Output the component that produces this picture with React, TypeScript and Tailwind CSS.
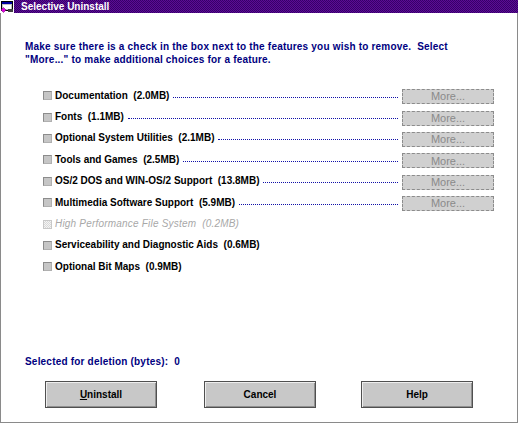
const features = [
  { label: "Documentation  (2.0MB)", more: true },
  { label: "Fonts  (1.1MB)", more: true },
  { label: "Optional System Utilities  (2.1MB)", more: true },
  { label: "Tools and Games  (2.5MB)", more: true },
  { label: "OS/2 DOS and WIN-OS/2 Support  (13.8MB)", more: true },
  { label: "Multimedia Software Support  (5.9MB)", more: true },
  { label: "High Performance File System  (0.2MB)", more: false, disabled: true },
  { label: "Serviceability and Diagnostic Aids  (0.6MB)", more: false },
  { label: "Optional Bit Maps  (0.9MB)", more: false },
]

const WindowIcon = () => (
  <svg width="14" height="13" viewBox="0 0 14 13" className="shrink-0">
    <rect x="0" y="0" width="14" height="13" fill="#ffffff" />
    <rect x="1.5" y="1.5" width="11" height="9" fill="#c0c0c0" stroke="#000" strokeWidth="1" />
    <rect x="2" y="2" width="10" height="2" fill="#0000a0" />
    <rect x="3" y="5" width="8" height="4" fill="#ffffff" />
    <path d="M3.5 12.5 L1 10 L3.5 7.5 L6 10 Z" fill="#e000e0" stroke="#600060" strokeWidth="0.5" />
    <rect x="8" y="9" width="5" height="3" fill="#404040" />
  </svg>
)

const Checkbox = ({ disabled }: { disabled?: boolean }) => (
  <div
    className={
      disabled
        ? "w-[9px] h-[9px] shrink-0 border border-[#c8c8c8] bg-[repeating-conic-gradient(#d8d8d8_0_25%,#f4f4f4_0_50%)] bg-[length:2px_2px]"
        : "w-[9px] h-[9px] shrink-0 border border-t-[#8c8c8c] border-l-[#8c8c8c] border-r-[#b0b0b0] border-b-[#b0b0b0] bg-[#c6c6c6]"
    }
  />
)

export default function App() {
  return (
    <div className="w-[518px] h-[424px] bg-white flex flex-col font-['Liberation_Sans',Arial,sans-serif] text-[10px] font-bold overflow-hidden">
      {/* title bar */}
      <div className="h-[13px] flex items-center shrink-0 bg-[repeating-conic-gradient(#5c0c94_0_25%,#36006a_0_50%)] bg-[length:2px_2px]">
        <WindowIcon />
        <span className="ml-[7px] text-white leading-none">Selective Uninstall</span>
      </div>

      <div className="h-[410px] border-l border-r border-b border-[#8a8a8a] flex flex-col pl-[24px]">
        <div className="mt-[27px] text-[#000080] leading-[13px] tracking-[0.2px]">
          <div className="whitespace-pre">Make sure there is a check in the box next to the features you wish to remove.  Select</div>
          <div>"More..." to make additional choices for a feature.</div>
        </div>

        <div className="mt-[19px] pl-[18px] pr-[23px] flex flex-col">
          {features.map((f) => (
            <div key={f.label} className="h-[21.4px] flex items-center">
              <Checkbox disabled={f.disabled} />
              <span
                className={
                  "ml-[3px] whitespace-pre leading-none " +
                  (f.disabled ? "text-[#a8a8a8] font-normal italic tracking-[0.2px]" : "text-black")
                }
              >
                {f.label}
              </span>
              {f.more && (
                <>
                  <div className="flex-1 ml-[4px] h-0 mt-[3px] border-b border-dotted border-[#1010a8]" />
                  <div className="ml-[4px] mt-[2px] w-[92px] h-[15px] shrink-0 border border-dashed border-[#8c8c8c] bg-[#d0d0d0] flex items-center justify-center text-[#8a8a8a] font-normal text-[11px]">
                    More...
                  </div>
                </>
              )}
            </div>
          ))}
        </div>

        <div className="mt-[77px] text-[#000080] leading-[13px] whitespace-pre tracking-[0.2px]">Selected for deletion (bytes):  0</div>

        <div className="mt-[13px] flex pl-[20px]">
          {["Uninstall", "Cancel", "Help"].map((b, i) => (
            <button
              key={b}
              className={
                "w-[112px] h-[27px] bg-[#c8c8c8] border border-[#505050] shadow-[inset_1px_1px_0_#eeeeee,inset_-1px_-1px_0_#909090] text-black text-[10px] font-bold " +
                (i === 1 ? "ml-[47px]" : i === 2 ? "ml-[45px]" : "")
              }
            >
              {b === "Uninstall" ? (
                <>
                  <span className="underline underline-offset-[1px]">U</span>ninstall
                </>
              ) : (
                b
              )}
            </button>
          ))}
        </div>
      </div>
    </div>
  )
}
